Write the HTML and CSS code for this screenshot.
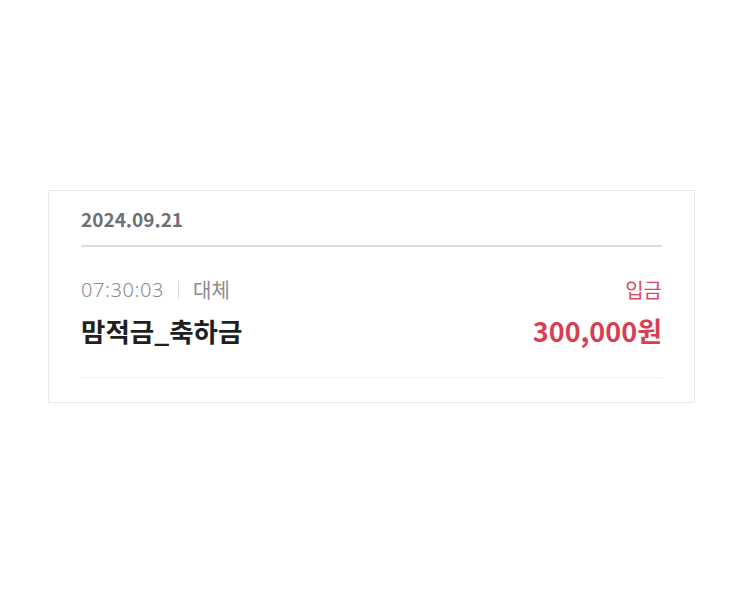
FILE: index.html
```html
<!DOCTYPE html>
<html lang="ko">
<head>
    <meta charset="UTF-8">
    <meta name="viewport" content="width=device-width, initial-scale=1.0">
    <title>거래내역</title>
    <link rel="stylesheet" href="styles.css">
</head>
<body>
    <!-- 거래내역 카드 -->
    <div class="page">
        <div class="history-card">
            <div class="history-date">2024.09.21</div>

            <div class="history-item">
                <div class="item-row">
                    <div class="item-meta">
                        <span class="item-time">07:30:03</span>
                        <span class="item-bar"></span>
                        <span class="item-type">대체</span>
                    </div>
                    <div class="item-kind">입금</div>
                </div>
                <div class="item-row">
                    <div class="item-name">맘적금_축하금</div>
                    <div class="item-amount">300,000원</div>
                </div>
            </div>
        </div>
    </div>
</body>
</html>
```

FILE: styles.css
```css
/* 기본 */
body {
    margin: 0;
    padding: 0;
    background-color: #ffffff;
    font-family: "Noto Sans CJK KR", "Noto Sans", sans-serif;
    color: #222222;
}

.page {
    padding: 190px 0 0 48px;
}

/* 카드 */
.history-card {
    width: 581px;
    padding: 0 32px 24px 32px;
    border: 1px solid #e8e8e8;
}

.history-date {
    padding: 16px 0 14px 0;
    font-size: 19px;
    font-weight: 700;
    line-height: 24px;
    color: #6d7078;
    border-bottom: 2px solid #dcdee1;
}

/* 거래 항목 */
.history-item {
    padding: 31px 0 28px 0;
    border-bottom: 1px solid #f0f0f0;
}

.item-row {
    display: flex;
    justify-content: space-between;
    align-items: center;
}

.item-meta {
    display: flex;
    align-items: center;
    gap: 14px;
    font-size: 20px;
    line-height: 24px;
    color: #8c8c8c;
}

.item-time {
    font-family: "Noto Sans", "Noto Sans CJK KR", sans-serif;
    font-weight: 300;
    letter-spacing: 0.6px;
}

.item-bar {
    width: 1px;
    height: 18px;
    background-color: #d8d8d8;
}

.item-type {
    font-weight: 400;
}

.item-kind {
    font-size: 20px;
    line-height: 24px;
    color: #d94b5e;
}

.item-name {
    margin-top: 11px;
    font-size: 26.5px;
    line-height: 36px;
    font-weight: 700;
    color: #1f1f1f;
}

.item-amount {
    margin-top: 11px;
    font-size: 27px;
    line-height: 36px;
    font-weight: 700;
    color: #d83f52;
}
```
